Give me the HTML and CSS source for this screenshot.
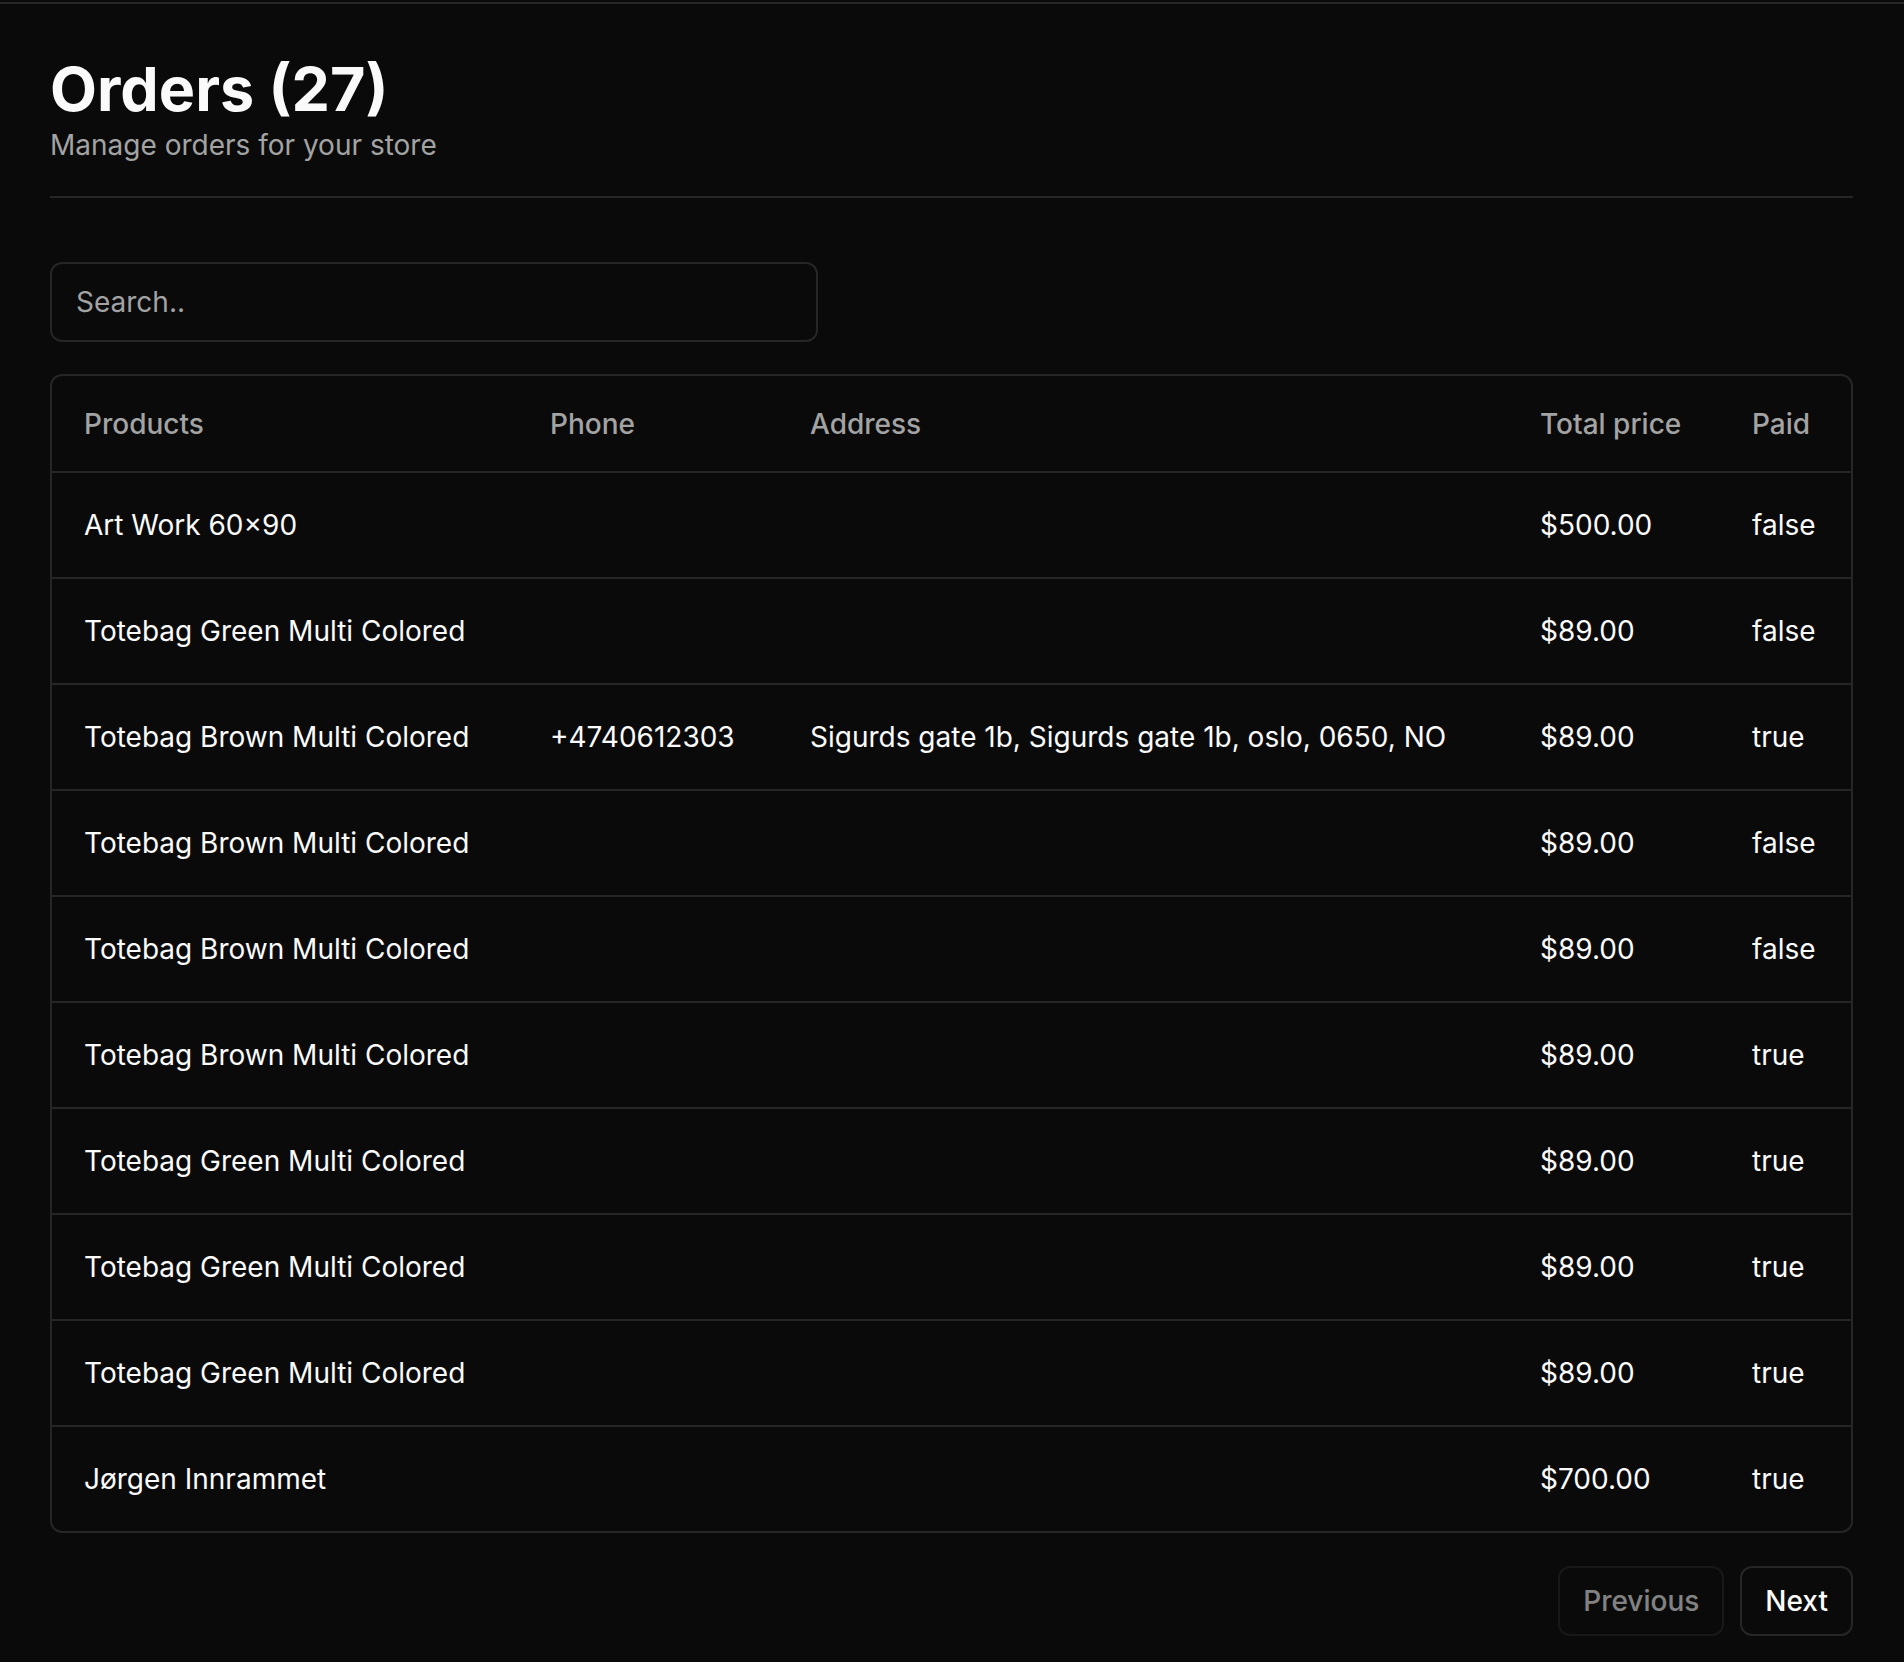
FILE: index.html
```html
<!DOCTYPE html>
<html lang="en">
<head>
<meta charset="utf-8">
<title>Orders</title>
<link rel="stylesheet" href="styles.css">
</head>
<body>
<div class="topline"></div>
<main class="page">
  <header class="heading">
    <h1 class="title">Orders (27)</h1>
    <p class="subtitle">Manage orders for your store</p>
  </header>
  <div class="separator"></div>
  <div class="toolbar">
    <input class="search" type="text" placeholder="Search..">
  </div>
  <div class="table-wrap">
    <table class="table">
      <colgroup>
        <col class="c-products">
        <col class="c-phone">
        <col class="c-address">
        <col class="c-total">
        <col class="c-paid">
      </colgroup>
      <thead>
        <tr><th>Products</th><th>Phone</th><th>Address</th><th>Total price</th><th>Paid</th></tr>
      </thead>
      <tbody>
        <tr><td>Art Work 60×90</td><td></td><td></td><td>$500.00</td><td>false</td></tr>
        <tr><td>Totebag Green Multi Colored</td><td></td><td></td><td>$89.00</td><td>false</td></tr>
        <tr><td>Totebag Brown Multi Colored</td><td>+4740612303</td><td>Sigurds gate 1b, Sigurds gate 1b, oslo, 0650, NO</td><td>$89.00</td><td>true</td></tr>
        <tr><td>Totebag Brown Multi Colored</td><td></td><td></td><td>$89.00</td><td>false</td></tr>
        <tr><td>Totebag Brown Multi Colored</td><td></td><td></td><td>$89.00</td><td>false</td></tr>
        <tr><td>Totebag Brown Multi Colored</td><td></td><td></td><td>$89.00</td><td>true</td></tr>
        <tr><td>Totebag Green Multi Colored</td><td></td><td></td><td>$89.00</td><td>true</td></tr>
        <tr><td>Totebag Green Multi Colored</td><td></td><td></td><td>$89.00</td><td>true</td></tr>
        <tr><td>Totebag Green Multi Colored</td><td></td><td></td><td>$89.00</td><td>true</td></tr>
        <tr><td>Jørgen Innrammet</td><td></td><td></td><td>$700.00</td><td>true</td></tr>
      </tbody>
    </table>
  </div>
  <div class="pagination">
    <button class="btn btn-disabled" disabled>Previous</button>
    <button class="btn">Next</button>
  </div>
</main>
</body>
</html>
```

FILE: styles.css
```css
* { box-sizing: border-box; }
html, body { margin: 0; padding: 0; }
body {
  background: #0a0a0a;
  color: #fafafa;
  font-family: Inter, "Noto Sans", sans-serif;
  min-height: 1662px;
}
.topline {
  height: 2px;
  margin-top: 2px;
  background: #262626;
}
.page {
  padding: 49px 51px 22px 50px;
}
.heading { display: flex; flex-direction: column; }
.title {
  margin: 0;
  font-size: 61px;
  line-height: 72px;
  font-weight: 700;
  letter-spacing: 0;
}
.subtitle {
  margin: 0;
  font-size: 28px;
  line-height: 40px;
  color: #a3a3a3;
}
.separator {
  height: 2px;
  background: #262626;
  margin-top: 31px;
}
.toolbar {
  padding: 64px 0 32px;
  display: flex;
}
.search {
  width: 768px;
  height: 80px;
  border: 2px solid #262626;
  border-radius: 12px;
  background: transparent;
  padding: 0 24px;
  font-family: inherit;
  font-size: 28px;
  color: #fafafa;
  outline: none;
}
.search::placeholder { color: #a3a3a3; }
.table-wrap {
  border: 2px solid #262626;
  border-radius: 12px;
  overflow: hidden;
}
.table {
  width: 100%;
  border-collapse: collapse;
  table-layout: fixed;
  font-size: 28px;
  line-height: 40px;
}
.c-products { width: 466px; }
.c-phone { width: 260px; }
.c-address { width: 730px; }
.c-total { width: 212px; }
.c-paid { width: auto; }
.table th {
  height: 96px;
  padding: 0 32px;
  text-align: left;
  font-weight: 500;
  color: #a3a3a3;
  vertical-align: middle;
}
.table thead tr { border-bottom: 2px solid #262626; }
.table td {
  padding: 32px;
  vertical-align: middle;
  white-space: nowrap;
}
.table tbody tr { border-bottom: 2px solid #262626; }
.table tbody tr:last-child { border-bottom: 0; }
.pagination {
  display: flex;
  justify-content: flex-end;
  gap: 16px;
  padding-top: 33px;
}
.btn {
  height: 70px;
  padding: 0 23px;
  border: 2px solid #262626;
  border-radius: 12px;
  background: #0a0a0a;
  color: #fafafa;
  font-family: inherit;
  font-size: 28px;
  font-weight: 500;
}
.btn-disabled { opacity: 0.5; }
```
